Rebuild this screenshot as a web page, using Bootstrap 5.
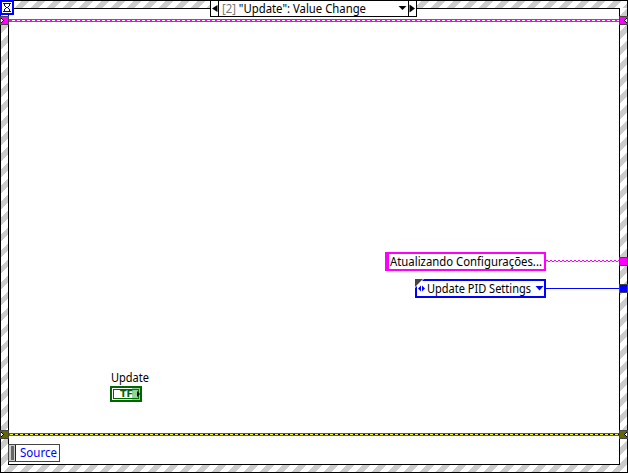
<!DOCTYPE html>
<html lang="pt-BR">
<head>
<meta charset="utf-8">
<meta name="viewport" content="width=device-width, initial-scale=1">
<title>Event structure</title>
<link href="https://cdn.jsdelivr.net/npm/bootstrap@5.3.0/dist/css/bootstrap.min.css" rel="stylesheet">
<style>
body{font:12px/15px "Noto Sans","Open Sans",sans-serif;color:#000;background:#fff}
.diagram{width:628px;height:473px;border:1px solid #000;padding:7px;background:repeating-linear-gradient(135deg,#fff 0 2.83px,#ccc 2.83px 8.49px,#fff 8.49px 11.314px) 0 0/626px 7px no-repeat,repeating-linear-gradient(135deg,#ccc 0 .7px,#fff .7px 6.36px,#ccc 6.36px 11.314px)}
.canvas{border:1px solid #000;background:#fff}
.node{position:absolute;white-space:nowrap}
.node svg,.node text{display:block}
.node svg{overflow:visible}
.selector{left:210px;top:0;width:207px;height:17px;border:1px solid #000;background:#fff}
.arrow{width:8px}
.arrow-l{border-right:1px solid #000}
.arrow-r{border-left:1px solid #000}
.wires{left:0;top:0;pointer-events:none}
.str{left:385px;top:252px;width:161px;height:19px;border:2px solid #f0f;border-left-width:4px;background:#fff}
.enum{left:415px;top:279px;width:131px;height:19px;border:2px solid #00f;background:#fff}
.src{left:8px;top:444px;width:52px;height:18px;border:1px solid #444;background:#fff;color:#00f}
.grip{width:7px;background:#ccc;border-right:1px solid #222;padding:1px 1px 1px 2px}
.grip span{background:#666;width:3px}
.node text{font:12px "Noto Sans","Open Sans",sans-serif}
</style>
</head>
<body class="overflow-hidden">
<main class="diagram d-flex position-relative">
<div class="canvas flex-grow-1"></div>
</main>
<svg class="node wires" width="628" height="473" shape-rendering="crispEdges">
<path d="M9 20.5H619" stroke="#f0f" stroke-width="3"/><path d="M12 20.5H619" stroke="#fff" stroke-dasharray="3 2"/>
<path d="M9 434.5H619" stroke="#660" stroke-width="3"/><path d="M10 434.5H619" stroke="#ff0" stroke-dasharray="3 2"/><path d="M13 434.5H619" stroke="#000" stroke-dasharray="2 3"/>
<path d="M546 288.5H620" stroke="#00f"/>
<path d="M546 260.5H620" stroke="#f0f" stroke-dasharray="2 2"/><path d="M548 261.5H620" stroke="#f0f" stroke-dasharray="2 2"/>
<g stroke="#444"><path d="M.5 16.500H8.500V24.500H.5ZM619.500 16.500H627.500V24.500H619.500ZM619.500 257.500H627.500V265.500H619.500Z" fill="#f0f"/><path d="M619.500 284.500H627.500V292.500H619.500Z" fill="#00f"/><path d="M.5 430.500H8.500V438.500H.5ZM619.500 430.500H627.500V438.500H619.500Z" fill="#660"/></g>
<path fill="#000" d="M1 18H2V19H3V20H4V21H3V22H2V23H1ZM627 18H626V19H625V20H624V21H625V22H626V23H627ZM1 432H2V433H3V434H4V435H3V436H2V437H1ZM627 432H626V433H625V434H624V435H625V436H626V437H627Z"/>
<path fill="#fff" d="M1 19H2V20H3V21H2V22H1ZM627 19H626V20H625V21H626V22H627ZM1 433H2V434H3V435H2V436H1ZM627 433H626V434H625V435H626V436H627Z"/>
</svg>
<svg class="node" style="left:0;top:0" width="14" height="15" shape-rendering="crispEdges"><path fill="#fff" stroke="#00f" stroke-width="2" d="M1 1H13V14H1Z"/><path fill="#00a" d="M3 3H11V4H3ZM3 11H11V12H3ZM4 4H5V6H4ZM9 4H10V6H9ZM5 6H6V7H5ZM8 6H9V7H8ZM6 7H8V8H6ZM5 8H6V9H5ZM8 8H9V9H8ZM4 9H5V11H4ZM9 9H10V11H9Z"/></svg>
<div class="node selector d-flex align-items-stretch">
<span class="arrow arrow-l"><svg width="7" height="15"><path d="M6.500 4V11L1 7.500Z"/></svg></span>
<svg width="189" height="15"><text x="3" y="12" textLength="144" lengthAdjust="spacingAndGlyphs"><tspan fill="#777">[2]</tspan> "Update": Value Change</text><path d="M179.500 5H187.500L183.500 9Z"/></svg>
<span class="arrow arrow-r"><svg width="7" height="15"><path d="M.5 3.500V11.500L6 7.500Z"/></svg></span>
</div>
<div class="node str"><svg width="155" height="15"><text x="1" y="12" textLength="152" lengthAdjust="spacingAndGlyphs">Atualizando Configurações...</text></svg></div>
<div class="node enum"><svg width="127" height="15"><path fill="#00f" d="M1 7.500 4 4.500V10.500ZM8 7.500 5 4.500V10.500ZM118.500 5H126.500L122.500 9.500Z"/><text x="10" y="12" textLength="104" lengthAdjust="spacingAndGlyphs">Update PID Settings</text></svg></div>
<svg class="node" style="left:415px;top:279px" width="9" height="9"><path fill="#fff" d="M0 0H9L0 9Z"/><path fill="#444" d="M0 0H8L0 8Z"/></svg>
<svg class="node" style="left:110px;top:370px" width="42" height="32"><text x="1" y="12" textLength="38" lengthAdjust="spacingAndGlyphs">Update</text>
<g shape-rendering="crispEdges"><path fill="#fff" stroke="#060" stroke-width="2" d="M1 17H31V31H1Z"/><path fill="#fff" stroke="#060" d="M3.500 19.500H28.500V28.500H3.500Z"/></g><text x="10" y="27" textLength="13" lengthAdjust="spacingAndGlyphs" style="font:bold 8px 'DejaVu Sans',sans-serif;fill:#060">TF</text><path fill="#080" opacity=".4" d="M22 18H30V30H22Z"/><path d="M27 21V27L30 24Z"/></svg>
<div class="node src d-flex"><span class="grip d-flex"><span></span></span><svg width="43" height="16"><text x="4" y="12" fill="#00f" textLength="37" lengthAdjust="spacingAndGlyphs">Source</text></svg></div>
<script src="https://cdn.jsdelivr.net/npm/bootstrap@5.3.0/dist/js/bootstrap.bundle.min.js"></script>
</body>
</html>
